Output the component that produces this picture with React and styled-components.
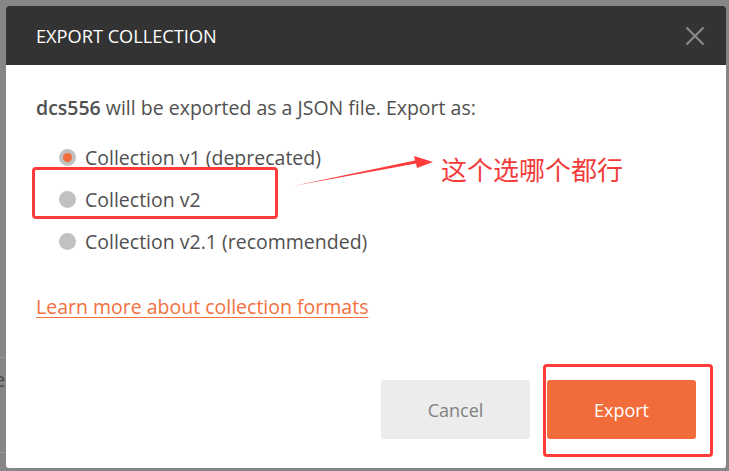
import styled, { createGlobalStyle } from 'styled-components';

const GlobalStyle = createGlobalStyle`
  html, body {
    margin: 0;
    padding: 0;
    background: #868686;
  }
  body {
    font-family: "Open Sans", "Noto Sans", sans-serif;
  }
`;

const Backdrop = styled.div`
  position: relative;
  width: 729px;
  height: 471px;
  overflow: hidden;
  background: #868686;
  padding: 6px 3px 3px 6px;
  box-sizing: border-box;
`;

const BehindText = styled.span`
  position: absolute;
  left: -6px;
  top: ${p => p.top}px;
  font-size: 20px;
  color: #4a4a4a;
`;

const BehindLine = styled.div`
  position: absolute;
  left: 0;
  width: 6px;
  top: ${p => p.top}px;
  height: 1px;
  background: #9a9a9a;
`;

const Modal = styled.div`
  position: relative;
  width: 720px;
  height: 462px;
  background: #fff;
  border-radius: 3px;
  overflow: hidden;
  display: flex;
  flex-direction: column;
`;

const Header = styled.div`
  height: 59px;
  flex: none;
  background: #333333;
  display: flex;
  align-items: center;
  justify-content: space-between;
  padding: 0 21px 0 30px;
`;

const Title = styled.h1`
  margin: 0;
  font-size: 18.2px;
  font-weight: 400;
  color: #ffffff;
`;

const Close = styled.button`
  border: none;
  background: none;
  padding: 0;
  width: 20px;
  height: 20px;
  display: flex;
`;

const Body = styled.div`
  flex: 1;
  display: flex;
  flex-direction: column;
  padding: 30px 30px 29px 30px;
`;

const Lead = styled.p`
  margin: 0;
  font-size: 19.5px;
  line-height: 26px;
  color: #505050;

  b {
    font-weight: 600;
  }
`;

const Options = styled.div`
  margin-top: 15px;
  display: flex;
  flex-direction: column;
`;

const Option = styled.label`
  height: 42px;
  display: flex;
  align-items: center;
  gap: 9px;
  padding-left: 23px;
  font-size: 19.5px;
  color: #505050;
`;

const Radio = styled.span`
  width: 17px;
  height: 17px;
  border-radius: 50%;
  background: #c1c1c1;
  display: flex;
  align-items: center;
  justify-content: center;

  &::after {
    content: '';
    width: 9px;
    height: 9px;
    border-radius: 50%;
    background: ${p => (p.checked ? '#f26b3a' : 'transparent')};
  }
`;

const Link = styled.a`
  margin-top: 32px;
  font-size: 19.5px;
  line-height: 26px;
  color: #f37040;
  text-decoration: underline;
  text-underline-offset: 3px;
  align-self: flex-start;
`;

const Footer = styled.div`
  margin-top: auto;
  display: flex;
  justify-content: flex-end;
  gap: 17px;
`;

const Button = styled.button`
  width: 149px;
  height: 59px;
  border: none;
  border-radius: 3px;
  font-family: "Open Sans", sans-serif;
  font-size: 18px;
  background: ${p => (p.primary ? '#f26b3a' : '#ececec')};
  color: ${p => (p.primary ? '#ffffff' : '#808080')};
`;

const Mark = styled.div`
  position: absolute;
  left: ${p => p.x}px;
  top: ${p => p.y}px;
  width: ${p => p.w}px;
  height: ${p => p.h}px;
  border: 3px solid #ff3b3b;
  border-radius: 4px;
  box-sizing: border-box;
`;

const Note = styled.span`
  position: absolute;
  left: 441px;
  top: 151px;
  font-family: "Noto Sans CJK SC", sans-serif;
  font-size: 26px;
  line-height: 36px;
  color: #f23c3c;
  white-space: nowrap;
`;

const Arrow = styled.svg`
  position: absolute;
  left: 290px;
  top: 150px;
`;

export default function App() {
  return (
    <>
      <GlobalStyle />
      <Backdrop>
        <BehindLine top={357} />
        <BehindText top={366}>e</BehindText>
        <BehindLine top={452} />
        <BehindText top={426}>i</BehindText>
        <Modal>
          <Header>
            <Title>EXPORT COLLECTION</Title>
            <Close>
              <svg width="20" height="20" viewBox="0 0 20 20">
                <path d="M1.5 1.5 L18.5 18.5 M18.5 1.5 L1.5 18.5" stroke="#8a8a8a" strokeWidth="2.2" />
              </svg>
            </Close>
          </Header>
          <Body>
            <Lead>
              <b>dcs556</b> will be exported as a JSON file. Export as:
            </Lead>
            <Options>
              <Option>
                <Radio checked />
                Collection v1 (deprecated)
              </Option>
              <Option>
                <Radio />
                Collection v2
              </Option>
              <Option>
                <Radio />
                Collection v2.1 (recommended)
              </Option>
            </Options>
            <Link>Learn more about collection formats</Link>
            <Footer>
              <Button>Cancel</Button>
              <Button primary>Export</Button>
            </Footer>
          </Body>
        </Modal>
        <Mark x={32} y={167} w={246} h={52} />
        <Mark x={543} y={364} w={170} h={93} />
        <Arrow width="150" height="40" viewBox="0 0 150 40">
          <polygon points="3,36 126,13.5 127,18 143,12 124,6 125,10.5" fill="#ff3b3b" />
        </Arrow>
        <Note>这个选哪个都行</Note>
      </Backdrop>
    </>
  );
}
